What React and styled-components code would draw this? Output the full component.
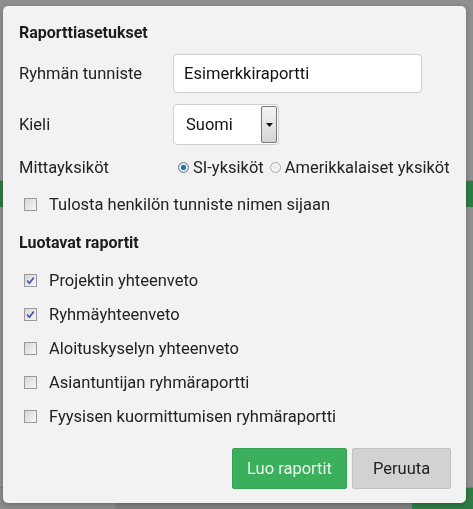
import React from "react"
import styled, { createGlobalStyle } from "styled-components"

const Global = createGlobalStyle`
  html, body {
    margin: 0;
    padding: 0;
    height: 100%;
    overflow: hidden;
  }
  body {
    background: #8e8e8e;
    font-family: Roboto, "Liberation Sans", Arial, sans-serif;
    font-size: 16.5px;
    color: #222;
  }
`

const reports = [
  { text: "Projektin yhteenveto", checked: true },
  { text: "Ryhmäyhteenveto", checked: true },
  { text: "Aloituskyselyn yhteenveto", checked: false },
  { text: "Asiantuntijan ryhmäraportti", checked: false },
  { text: "Fyysisen kuormittumisen ryhmäraportti", checked: false },
]

export default function App() {
  return (
    <>
      <Global />
      <Page>
        <PageRow $h={30} />
        <PageRow $h={150} $line />
        <PageRow $h={26} $green />
        <PageRow $h={280} $line />
        <PageFooter>
          <FooterCell $w={115} />
          <FooterCell $w={297} $light />
          <FooterCell $green />
        </PageFooter>
      </Page>
      <Overlay>
        <Dialog>
          <Heading>Raporttiasetukset</Heading>
          <FormRow $mt={11}>
            <Label>Ryhmän tunniste</Label>
            <TextInput defaultValue="Esimerkkiraportti" />
          </FormRow>
          <FormRow $mt={11}>
            <Label>Kieli</Label>
            <Select>
              <span>Suomi</span>
              <SelectArrow>
                <svg width="7" height="4" viewBox="0 0 7 4">
                  <path d="M0 0h7L3.5 4z" fill="#111" />
                </svg>
              </SelectArrow>
            </Select>
          </FormRow>
          <FormRow $mt={12} $h={20}>
            <Label>Mittayksiköt</Label>
            <Radios>
              <RadioItem>
                <Radio $on />
                SI-yksiköt
              </RadioItem>
              <RadioItem>
                <Radio />
                Amerikkalaiset yksiköt
              </RadioItem>
            </Radios>
          </FormRow>
          <CheckRow $mt={17}>
            <Check />
            Tulosta henkilön tunniste nimen sijaan
          </CheckRow>
          <Heading $mt={19}>Luotavat raportit</Heading>
          {reports.map((r, i) => (
            <CheckRow key={r.text} $mt={i === 0 ? 17 : 14}>
              <Check $on={r.checked}>
                {r.checked && (
                  <svg width="9" height="9" viewBox="0 0 9 9">
                    <path d="M1.2 4.6 L3.4 7.2 L7.8 1.4" fill="none" stroke="#3d4fa8" strokeWidth="1.6" />
                  </svg>
                )}
              </Check>
              {r.text}
            </CheckRow>
          ))}
          <Buttons>
            <Button $primary $w={115}>Luo raportit</Button>
            <Button $w={99}>Peruuta</Button>
          </Buttons>
        </Dialog>
      </Overlay>
    </>
  )
}

const Page = styled.div`
  display: flex;
  flex-direction: column;
  height: 509px;
  background: #8f8f8f;
`

const PageRow = styled.div`
  height: ${p => p.$h}px;
  flex-shrink: 0;
  background: ${p => (p.$green ? "#2e7a45" : "#8f8f8f")};
  border-bottom: ${p => (p.$line ? "1px solid #7c7c7c" : "none")};
`

const PageFooter = styled.div`
  flex: 1;
  display: flex;
  align-items: flex-end;
`

const FooterCell = styled.div`
  height: 22px;
  width: ${p => (p.$w ? `${p.$w}px` : "auto")};
  flex: ${p => (p.$w ? "none" : "1")};
  background: ${p => (p.$green ? "#2e7a45" : p.$light ? "#7e7e7e" : "#8a8a8a")};
`

const Overlay = styled.div`
  position: fixed;
  inset: 0;
  display: flex;
  align-items: flex-start;
  justify-content: flex-start;
  padding: 6px 0 0 3px;
`

const Dialog = styled.div`
  width: 463px;
  height: 497px;
  box-sizing: border-box;
  background: #f2f2f2;
  border-radius: 5px;
  padding: 17px 15px 14px 16px;
  display: flex;
  flex-direction: column;
  box-shadow: 0 1px 4px rgba(0, 0, 0, 0.25);
`

const Heading = styled.div`
  height: 20px;
  line-height: 20px;
  font-weight: 700;
  font-size: 16px;
  color: #1c1c1c;
  margin-top: ${p => p.$mt || 0}px;
`

const FormRow = styled.div`
  display: flex;
  align-items: center;
  margin-top: ${p => p.$mt || 0}px;
  height: ${p => (p.$h ? `${p.$h}px` : "auto")};
`

const Label = styled.div`
  width: 154px;
  flex-shrink: 0;
  color: #222;
`

const TextInput = styled.input`
  width: 249px;
  height: 39px;
  box-sizing: border-box;
  border: 1px solid #cfcfcf;
  border-radius: 4px;
  background: #fff;
  padding: 0 10px;
  font: inherit;
  color: #111;
  outline: none;
`

const Select = styled.div`
  width: 106px;
  height: 41px;
  box-sizing: border-box;
  border: 1px solid #cfcfcf;
  border-radius: 4px;
  background: #fff;
  display: flex;
  align-items: stretch;
  justify-content: space-between;
  padding: 1px 1px 1px 12px;
  span {
    align-self: center;
    color: #111;
  }
`

const SelectArrow = styled.div`
  width: 16px;
  box-sizing: border-box;
  border: 1px solid #777;
  border-radius: 2px;
  background: linear-gradient(#f4f4f4, #d4d4d4);
  display: flex;
  align-items: center;
  justify-content: center;
`

const Radios = styled.div`
  display: flex;
  align-items: center;
  gap: 6px;
  margin-left: 5px;
`

const RadioItem = styled.label`
  display: flex;
  align-items: center;
  gap: 4px;
  color: #222;
`

const Radio = styled.span`
  width: 11px;
  height: 11px;
  box-sizing: border-box;
  border-radius: 50%;
  border: 1px solid ${p => (p.$on ? "#6a7c8a" : "#a8a8a8")};
  background: ${p =>
    p.$on
      ? "radial-gradient(circle, #1f5f88 0, #3a86b6 2.5px, #dbe6ee 3px)"
      : "radial-gradient(circle, #e8e8e8 0, #f6f6f6 4px)"};
`

const CheckRow = styled.label`
  display: flex;
  align-items: center;
  height: 20px;
  margin-top: ${p => p.$mt || 0}px;
  padding-left: 5px;
  color: #222;
`

const Check = styled.span`
  width: 13px;
  height: 13px;
  box-sizing: border-box;
  border: 1px solid #9a9a9a;
  background: linear-gradient(135deg, #d6d6d6, #f7f7f7);
  margin-right: 12px;
  display: flex;
  align-items: center;
  justify-content: center;
  flex-shrink: 0;
`

const Buttons = styled.div`
  display: flex;
  justify-content: flex-end;
  gap: 5px;
  margin-top: auto;
`

const Button = styled.button`
  width: ${p => p.$w}px;
  height: 41px;
  box-sizing: border-box;
  padding: 0;
  border: 1px solid ${p => (p.$primary ? "#35a052" : "#c2c2c2")};
  border-radius: 2px;
  background: ${p => (p.$primary ? "#3caf5c" : "#d2d2d2")};
  color: ${p => (p.$primary ? "#eaf7ee" : "#222")};
  font: inherit;
  cursor: pointer;
`
